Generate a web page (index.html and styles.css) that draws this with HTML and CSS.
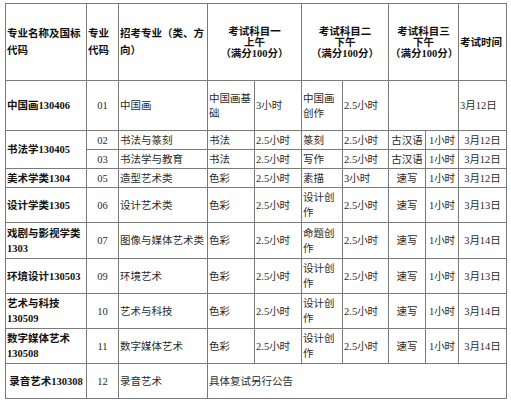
FILE: index.html
```html
<!DOCTYPE html>
<html lang="zh-CN">
<head>
<meta charset="utf-8">
<title>考试安排</title>
<link rel="stylesheet" href="styles.css">
</head>
<body>
<table class="exam">
  <colgroup>
    <col class="c1"><col class="c2"><col class="c3"><col class="c4"><col class="c5">
    <col class="c6"><col class="c7"><col class="c8"><col class="c9"><col class="c10">
  </colgroup>
  <tr class="r-head">
    <th class="hl">专业名称及国标<br>代码</th>
    <th class="hl">专业<br>代码</th>
    <th class="hl">招考专业（类、方<br>向）</th>
    <th class="hc" colspan="2">考试科目一<br>上午<br>（满分100分）</th>
    <th class="hc" colspan="2">考试科目二<br>下午<br>（满分100分）</th>
    <th class="hc" colspan="2">考试科目三<br>下午<br>（满分100分）</th>
    <th class="hl">考试时间</th>
  </tr>
  <tr class="r50">
    <td class="name">中国画130406</td>
    <td class="ctr">01</td>
    <td>中国画</td>
    <td>中国画基<br>础</td>
    <td>3小时</td>
    <td>中国画<br>创作</td>
    <td>2.5小时</td>
    <td colspan="2"></td>
    <td>3月12日</td>
  </tr>
  <tr class="r19">
    <td class="name" rowspan="2">书法学130405</td>
    <td class="ctr">02</td>
    <td>书法与篆刻</td>
    <td>书法</td>
    <td>2.5小时</td>
    <td>篆刻</td>
    <td>2.5小时</td>
    <td class="ctr">古汉语</td>
    <td class="ctr">1小时</td>
    <td class="ctr">3月12日</td>
  </tr>
  <tr class="r19">
    <td class="ctr">03</td>
    <td>书法学与教育</td>
    <td>书法</td>
    <td>2.5小时</td>
    <td>写作</td>
    <td>2.5小时</td>
    <td class="ctr">古汉语</td>
    <td class="ctr">1小时</td>
    <td class="ctr">3月12日</td>
  </tr>
  <tr class="r19">
    <td class="name">美术学类1304</td>
    <td class="ctr">05</td>
    <td>造型艺术类</td>
    <td>色彩</td>
    <td>2.5小时</td>
    <td>素描</td>
    <td>3小时</td>
    <td class="ctr">速写</td>
    <td class="ctr">1小时</td>
    <td class="ctr">3月12日</td>
  </tr>
  <tr class="r35">
    <td class="name">设计学类1305</td>
    <td class="ctr">06</td>
    <td>设计艺术类</td>
    <td>色彩</td>
    <td>2.5小时</td>
    <td>设计创<br>作</td>
    <td>2.5小时</td>
    <td class="ctr">速写</td>
    <td class="ctr">1小时</td>
    <td class="ctr">3月13日</td>
  </tr>
  <tr class="r36">
    <td class="name">戏剧与影视学类<br>1303</td>
    <td class="ctr">07</td>
    <td>图像与媒体艺术类</td>
    <td>色彩</td>
    <td>2.5小时</td>
    <td>命题创<br>作</td>
    <td>2.5小时</td>
    <td class="ctr">速写</td>
    <td class="ctr">1小时</td>
    <td class="ctr">3月14日</td>
  </tr>
  <tr class="r35">
    <td class="name">环境设计130503</td>
    <td class="ctr">09</td>
    <td>环境艺术</td>
    <td>色彩</td>
    <td>2.5小时</td>
    <td>设计创<br>作</td>
    <td>2.5小时</td>
    <td class="ctr">速写</td>
    <td class="ctr">1小时</td>
    <td class="ctr">3月13日</td>
  </tr>
  <tr class="r35">
    <td class="name">艺术与科技<br>130509</td>
    <td class="ctr">10</td>
    <td>艺术与科技</td>
    <td>色彩</td>
    <td>2.5小时</td>
    <td>设计创<br>作</td>
    <td>2.5小时</td>
    <td class="ctr">速写</td>
    <td class="ctr">1小时</td>
    <td class="ctr">3月14日</td>
  </tr>
  <tr class="r35">
    <td class="name">数字媒体艺术<br>130508</td>
    <td class="ctr">11</td>
    <td>数字媒体艺术</td>
    <td>色彩</td>
    <td>2.5小时</td>
    <td>设计创<br>作</td>
    <td>2.5小时</td>
    <td class="ctr">速写</td>
    <td class="ctr">1小时</td>
    <td class="ctr">3月14日</td>
  </tr>
  <tr class="r35">
    <td class="name ctr">录音艺术130308</td>
    <td class="ctr">12</td>
    <td>录音艺术</td>
    <td colspan="7">具体复试另行公告</td>
  </tr>
</table>
</body>
</html>
```
FILE: styles.css
```css
html, body {
  margin: 0;
  padding: 0;
  background: #ffffff;
}

body {
  padding: 3px 0 0 5px;
}

.exam {
  border-collapse: collapse;
  table-layout: fixed;
  width: 502px;
  font-family: "Liberation Serif", "Noto Sans CJK SC", sans-serif;
  font-size: 10.5px;
  color: #2a2a2a;
}

.c1 { width: 81px; }
.c2 { width: 32px; }
.c3 { width: 89px; }
.c4 { width: 47px; }
.c5 { width: 47px; }
.c6 { width: 41px; }
.c7 { width: 46px; }
.c8 { width: 37px; }
.c9 { width: 33px; }
.c10 { width: 48px; }

.exam th,
.exam td {
  border: 1px solid #7a7a7a;
  padding: 0 1px;
  vertical-align: middle;
  text-align: left;
  line-height: 15px;
  white-space: nowrap;
  overflow: hidden;
}

.exam th {
  font-weight: 700;
  color: #111111;
}

.exam .hl {
  line-height: 17px;
}

.exam .hc {
  text-align: center;
  line-height: 11px;
}

.exam .name {
  font-weight: 700;
  color: #111111;
}

.exam .ctr {
  text-align: center;
}

.r-head { height: 77px; }
.r50 { height: 50px; }
.r19 { height: 19px; }
.r35 { height: 35px; }
.r36 { height: 36px; }
```
